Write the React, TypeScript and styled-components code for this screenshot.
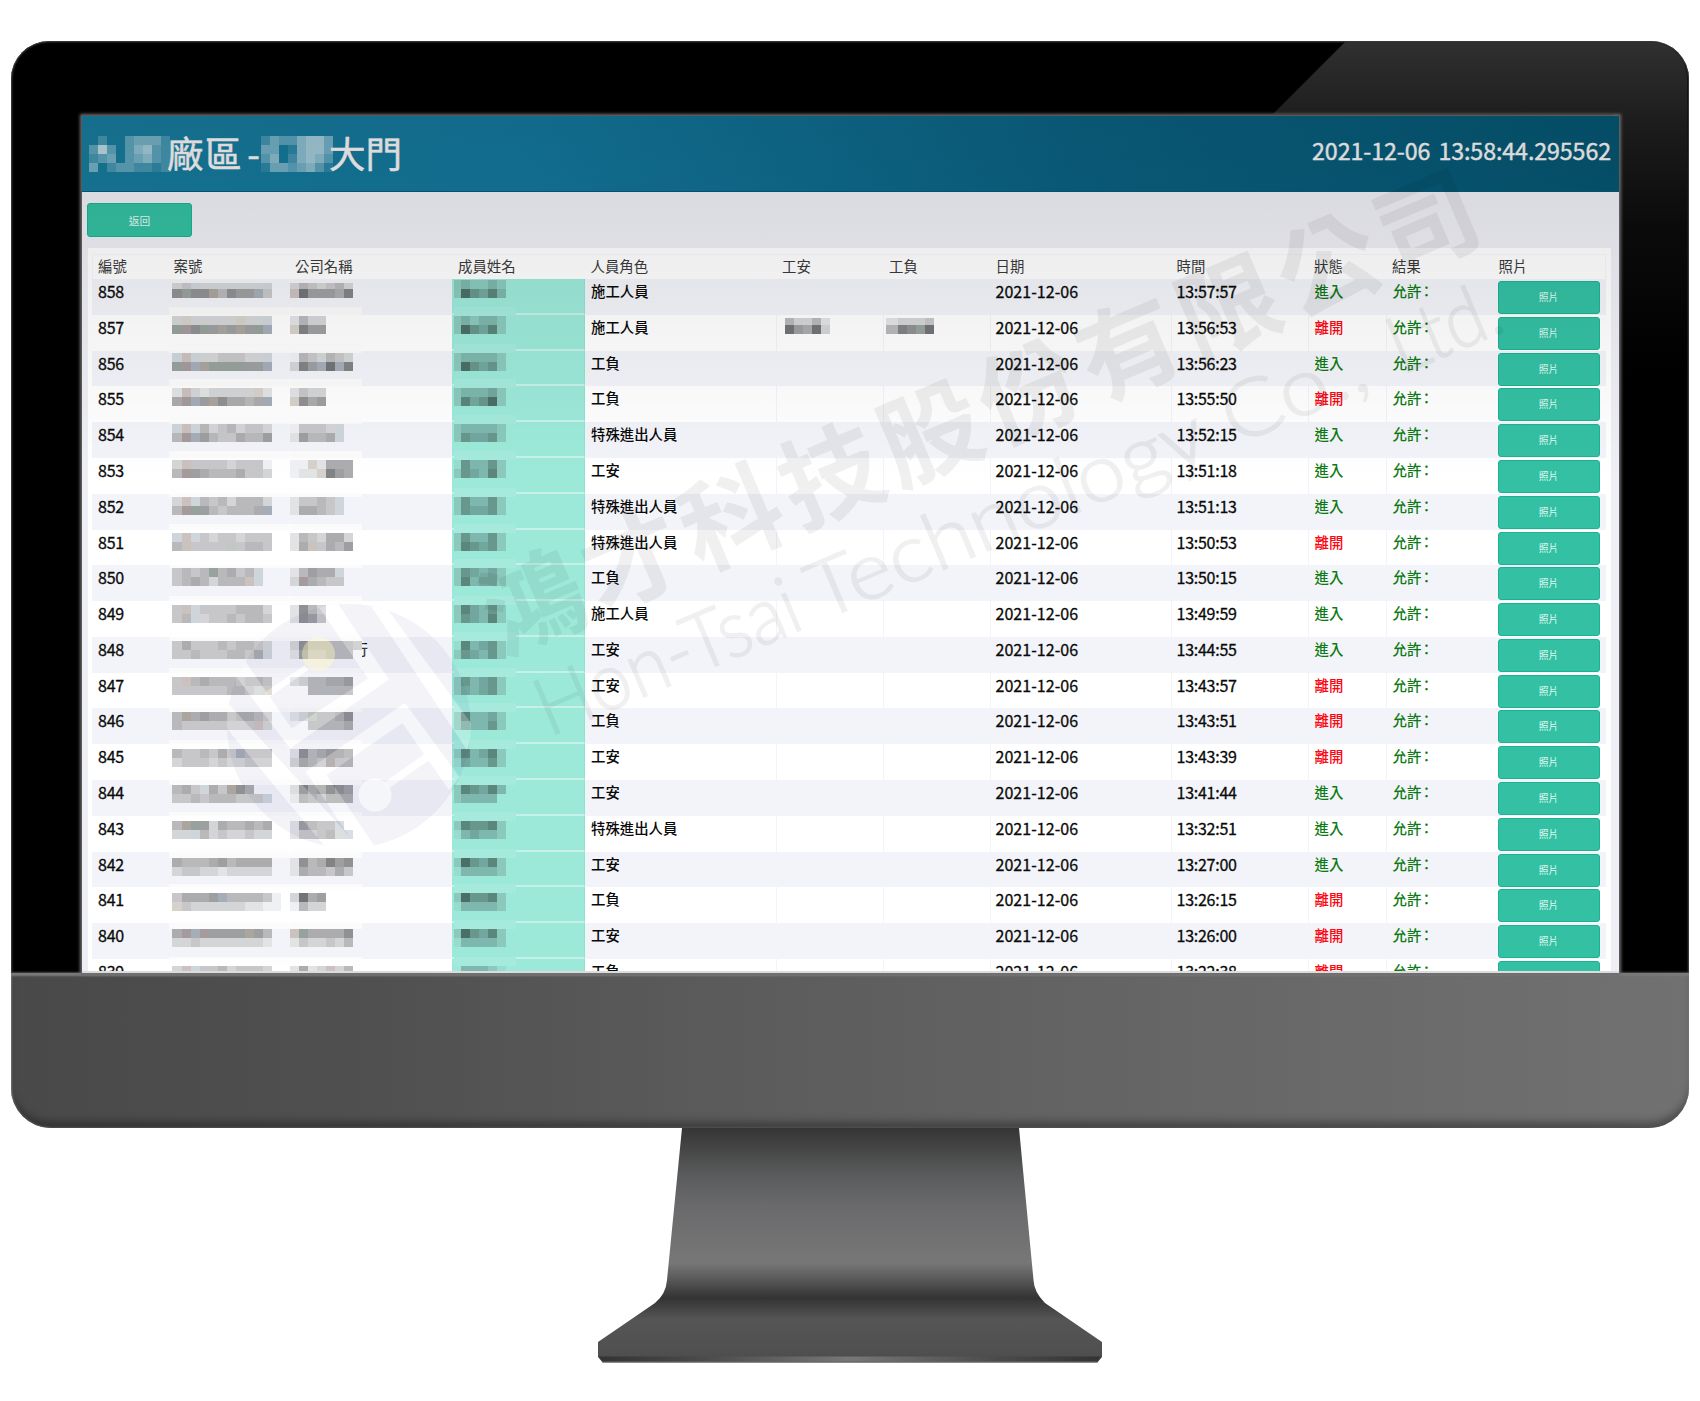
import React from "react";
import styled, { createGlobalStyle, css } from "styled-components";

const CJK = `"Noto Sans CJK TC", "Noto Sans", sans-serif`;

const GlobalStyle = createGlobalStyle`
  * { box-sizing: border-box; }
  body { margin: 0; background: #fff; font-family: ${CJK}; }
`;

const COLUMNS =
  "75.5px 121.5px 163px 132.5px 191.5px 107px 106.5px 181px 137.5px 78px 106.5px 112px";

/* ---------- monitor ---------- */

const Page = styled.main`
  width: 1700px;
  height: 1401px;
  padding: 41px 0 0 11px;
  overflow: hidden;
`;

const Monitor = styled.div`
  width: 1678px;
  display: flex;
  flex-direction: column;
  align-items: center;
`;

const Bezel = styled.div`
  position: relative;
  width: 100%;
  height: 932px;
  padding: 75px 70px 0 71px;
  background: #000;
  border-radius: 38px 38px 0 0;
  box-shadow: inset 0 0 2px 1px #4a4a4a;
`;

const Gloss = styled.div`
  position: absolute;
  inset: 1px 2px auto auto;
  width: 414px;
  height: 330px;
  border-radius: 0 36px 0 0;
  background: linear-gradient(#303030, #1c1c1c 25%, #0b0b0b 55%, #000);
  clip-path: polygon(72px 0, 100% 0, 100% 100%, 340px 100%, 340px 72px, 0 72px);
`;

const Chin = styled.div`
  width: 100%;
  height: 155px;
  border-radius: 0 0 40px 40px;
  background: linear-gradient(90deg, #49494a, #505050 22%, #5b5b5b 42%, #686868 75%, #717171);
  box-shadow: inset 0 3px 2px #7a7a7a, inset 0 -9px 9px -3px rgba(0, 0, 0, 0.35),
    inset 0 0 2px 1px #777;
`;

const StandArt = styled.svg`
  display: block;
  width: 504px;
  height: 236px;
`;

/* ---------- screen ---------- */

const Screen = styled.div`
  position: relative;
  z-index: 1;
  width: 1537px;
  height: 857px;
  display: flex;
  flex-direction: column;
  background: #eeeef5;
  box-shadow: 0 0 3px 2px #6c6c6c;
`;

const Header = styled.header`
  flex: none;
  height: 76px;
  padding: 0 8px 0 7px;
  display: flex;
  align-items: flex-start;
  justify-content: space-between;
  background: linear-gradient(97deg, #177b9c, #13769a 30%, #0a6080 65%, #055571);
  border-bottom: 1px solid #04597a;
`;

const Title = styled.h1`
  margin: 0;
  padding-top: 20px;
  display: flex;
  align-items: flex-start;
  font-size: 36.5px;
  font-weight: 400;
  line-height: 33px;
  color: #f4f2f2;
`;

const TitleText = styled.span<{ $w: number }>`
  display: flex;
  justify-content: space-between;
  width: ${(p) => p.$w}px;
  margin-left: -4px;
  white-space: nowrap;
  -webkit-text-stroke: 0.5px #f4f2f2;
`;

const Spaced = styled.span`
  padding-left: 1px;
  letter-spacing: 1.5px;
`;

const Clock = styled.time`
  padding-top: 19px;
  font-size: 23.2px;
  line-height: 30px;
  word-spacing: 3px;
  letter-spacing: -0.08px;
  color: #f4f2f2;
  -webkit-text-stroke: 0.4px #f4f2f2;
`;

const Toolbar = styled.div`
  flex: none;
  height: 56px;
  padding: 11px 0 0 5px;
`;

const buttonLook = css`
  border: 1px solid #19b394;
  border-radius: 3px;
  background: #34c0a3;
  color: #e2fbf5;
  font-family: ${CJK};
  display: flex;
  align-items: center;
  justify-content: center;
  padding: 0;
`;

const BackButton = styled.button`
  ${buttonLook}
  width: 105px;
  height: 34px;
  font-size: 10.7px;
`;

const PhotoButton = styled.button`
  ${buttonLook}
  width: 102px;
  height: 33px;
  padding-bottom: 1px;
  font-size: 9.8px;
`;

const Panel = styled.section`
  width: 1523px;
  height: 723px;
  margin-left: 6px;
  padding: 6px 5px 0 4px;
  background: #fff;
  overflow: hidden;
`;

const ScreenFoot = styled.div`
  height: 2px;
  background: #dcdcdc;
`;

const HeadRow = styled.div`
  display: grid;
  grid-template-columns: ${COLUMNS};
  height: 25px;
  border: 1px solid #f7f7f9;
  border-bottom: 0;
`;

const HeadCell = styled.div`
  padding-left: 5px;
  font-size: 14.4px;
  line-height: 21px;
  color: #3a3a3a;
`;

const Row = styled.div<{ $tall: boolean; $tint: boolean }>`
  display: grid;
  grid-template-columns: ${COLUMNS};
  height: ${(p) => (p.$tall ? 36 : 35)}px;
  background: ${(p) => (p.$tint ? "#f3f4f9" : "#fff")};
`;

const Cell = styled.div<{ $color?: string; $line?: boolean }>`
  min-width: 0;
  padding: 0 0 0 5.5px;
  font-size: 14.4px;
  line-height: 24px;
  font-weight: 500;
  color: ${(p) => p.$color ?? "#0a0a0a"};
  border-left: 1px solid ${(p) => (p.$line ? "#f4f4f8" : "transparent")};
  white-space: nowrap;
`;

const NumberCell = styled(Cell)<{ $tracking?: number }>`
  padding-left: 5px;
  font-size: 16px;
  font-weight: 400;
  letter-spacing: ${(p) => p.$tracking ?? 0}px;
  -webkit-text-stroke: 0.3px #0a0a0a;
`;

const Colon = styled.span`
  margin-left: -2px;
`;

const MaskedCell = styled.div<{ $inset: number }>`
  min-width: 0;
  padding-left: ${(p) => p.$inset}px;
`;

const MemberCell = styled(MaskedCell)`
  background: #9ce9da;
  border-right: 1px solid #8fe2d2;
  border-bottom: 2px solid #c6f1e9;
`;

const PhotoCell = styled.div`
  padding: 2px 0 0 5px;
`;

/* ---------- mosaics ---------- */

const MosaicBox = styled.div<{ $shift: number; $nudge: number }>`
  display: flex;
  flex-direction: column;
  width: max-content;
  margin-top: ${(p) => p.$shift}px;
  margin-left: ${(p) => p.$nudge}px;
`;

const Haze = styled.div<{ $w: number; $pull: number; $color: string }>`
  width: ${(p) => p.$w}px;
  height: 9px;
  margin-left: -${(p) => p.$pull}px;
  background: ${(p) => p.$color};
`;

const MosaicLine = styled.div<{ $h: number }>`
  display: flex;
  height: ${(p) => p.$h}px;
`;

const Block = styled.i<{ $c: string; $w: number }>`
  flex: none;
  width: ${(p) => p.$w}px;
  background: ${(p) => p.$c};
`;

const WithTail = styled.div`
  display: flex;
  align-items: flex-end;
`;

const Tail = styled.span`
  width: 6px;
  height: 19px;
  overflow: hidden;
  display: flex;
  justify-content: flex-end;
  font-size: 14.4px;
  font-weight: 500;
  line-height: 18px;
`;

const GREY: Record<string, string> = {
  "0": "#727577", "1": "#818385", "2": "#909193", "3": "#9e9fa1", "4": "#acacae",
  "5": "#b9b9bb", "6": "#c7c7c9", "7": "#d4d5d6", "8": "#e2e3e5", "9": "#eff0f3",
  p: "#cbc1bf", P: "#a59b9d", b: "#ced5db", B: "#a5adb8",
  g: "#c3c7c1", G: "#98a29d", t: "#d6d1ca", T: "#aaa59e",
};

const TEAL: Record<string, string> = {
  "0": "#4a6f66", "1": "#5a867b", "2": "#67978d", "3": "#72a79f",
  "4": "#7db7ad", "5": "#8bc9bd", "6": "#96dccf",
};

const WHITE: Record<string, string> = Object.fromEntries(
  "123456789".split("").map((d) => [d, `rgba(255,255,255,${Number(d) / 10})`]),
);

function Mosaic(props: {
  lines: string[];
  palette: Record<string, string>;
  shift?: number;
  nudge?: number;
  haze?: { w: number; pull: number; color: string };
  firstWidth?: number;
  firstHeight?: number;
}) {
  const { lines, palette, shift = 0, nudge = 0, haze, firstWidth = 9, firstHeight = 9 } = props;
  return (
    <MosaicBox $shift={haze ? shift - 9 : shift} $nudge={nudge}>
      {haze && <Haze $w={haze.w} $pull={haze.pull} $color={haze.color} />}
      {lines.map((line, y) => (
        <MosaicLine key={y} $h={y === 0 ? firstHeight : 9}>
          {line.split("").map((ch, x) => (
            <Block key={x} $c={palette[ch] ?? "transparent"} $w={x === 0 ? firstWidth : 9} />
          ))}
        </MosaicLine>
      ))}
    </MosaicBox>
  );
}

/* ---------- records ---------- */

type Entry = {
  id: number;
  role: string;
  time: string;
  out?: boolean;
  caseNo: [string, string];
  company: [string, string];
  member: [string, string];
  safety?: [string, string];
  lead?: [string, string];
  tail?: string;
};

const ENTRIES: Entry[] = [
  { id: 858, role: "施工人員", time: "13:57:57", caseNo: ["76b7777777b", "2G22T5233B6"], company: ["7567657", "p033341"], member: ["545545", "502314"] },
  { id: 857, role: "施工人員", time: "13:56:53", out: true, caseNo: ["7t77777t77b", "GP2G3T3T3GB"], company: ["8577", "t133"], member: ["545445", "502315"], safety: ["57758", "03407"], lead: ["87776", "512G0"] },
  { id: 856, role: "工負", time: "13:56:23", caseNo: ["bpb7766677b", "GPBTGGGG33B"], company: ["9567567", "713B0B1"], member: ["544445", "502325"] },
  { id: 855, role: "工負", time: "13:55:50", out: true, caseNo: ["8p7877777t8", "4PB3T24454B"], company: ["8677", "t243"], member: ["544435", "513205"] },
  { id: 854, role: "特殊進出人員", time: "13:52:15", caseNo: ["bpb57657667", "5PB35664553"], company: ["96667b", "83554b"], member: ["544445", "523325"] },
  { id: 853, role: "工安", time: "13:51:18", caseNo: ["7p666676669", "5P345554667"], company: ["99t8444", "988t134"], member: ["624425", "523415"] },
  { id: 852, role: "特殊進出人員", time: "13:51:13", caseNo: ["7pb56575557", "5PG3565554B"], company: ["86656b", "84456b"], member: ["524425", "523325"] },
  { id: 851, role: "特殊進出人員", time: "13:50:53", out: true, caseNo: ["bpb67667666", "5p6666g6556"], company: ["8567447", "84p6453"], member: ["524425", "512325"] },
  { id: 850, role: "工負", time: "13:50:15", caseNo: ["6565G5465b", "65457555pb"], company: ["85344b", "7P4566"], member: ["523435", "514335"] },
  { id: 849, role: "施工人員", time: "13:49:59", caseNo: ["6pb66665557", "65b76656556"], company: ["8257", "8236"], member: ["513425", "523415"] },
  { id: 848, role: "工安", time: "13:44:55", caseNo: ["64666565567", "6656665564b"], company: ["72555556", "8366555"], member: ["614325", "523425"], tail: "行" },
  { id: 847, role: "工安", time: "13:43:57", out: true, caseNo: ["6p545556556", "6666665567t"], company: ["8755443", "..55555"], member: ["524325", "534325"] },
  { id: 846, role: "工負", time: "13:43:51", out: true, caseNo: ["5T434454456", "566666666p7"], company: ["87g5542", "..55554"], member: ["514435", "534425"] },
  { id: 845, role: "工安", time: "13:43:39", out: true, caseNo: ["5665646B555", "76667677666"], company: ["8254334", "7456P55"], member: ["514315", "634425"] },
  { id: 844, role: "工安", time: "13:41:44", caseNo: ["546b46T24", "6656555666b"], company: ["7143023", "8456444"], member: ["512314", "54444"] },
  { id: 843, role: "特殊進出人員", time: "13:32:51", caseNo: ["5TG37455454", "77b57677677"], company: ["83455b", "866547b"], member: ["512215", "643445"] },
  { id: 842, role: "工安", time: "13:27:00", caseNo: ["45554354444", "76677877777"], company: ["8254132", "8455646"], member: ["502315", "644445"] },
  { id: 841, role: "工負", time: "13:26:15", out: true, caseNo: ["64443B555569", "t67777778899"], company: ["7043", "9577"], member: ["502215", "644445"] },
  { id: 840, role: "工安", time: "13:26:00", out: true, caseNo: ["4PBP3333T35", "77677777778"], company: ["pG44442", "8677675"], member: ["502315", "644445"] },
  { id: 839, role: "工負", time: "13:22:38", out: true, caseNo: ["7pb66576667", "7pb66576667"], company: ["8487p75", "8487p75"], member: ["744456", "744456"] },
];

const HEADINGS = ["編號", "案號", "公司名稱", "成員姓名", "人員角色", "工安", "工負", "日期", "時間", "狀態", "結果", "照片"];

const PITCH = 35.79;

function EntryRow({ entry, index }: { entry: Entry; index: number }) {
  const top = Math.round(index * PITCH);
  const tall = Math.round((index + 1) * PITCH) - top === 36;
  const white = index % 2 === 1;
  const first = index === 0;
  const shift = 1 + Math.round(index * 0.29);
  const greyHaze = first ? "transparent" : "rgba(253, 253, 253, 0.7)";
  const tealHaze = first ? "transparent" : "#a5eadd";
  const greyShift = first ? 4 : shift;
  const greyTop = first ? 6 : 9;
  return (
    <Row $tall={tall} $tint={!white}>
      <NumberCell $tracking={-0.2}>{entry.id}</NumberCell>
      <MaskedCell $inset={4}>
        <Mosaic
          lines={entry.caseNo}
          palette={GREY}
          shift={greyShift}
          firstHeight={greyTop}
          firstWidth={10}
          haze={{ w: 122, pull: 3, color: greyHaze }}
        />
      </MaskedCell>
      <MaskedCell $inset={1}>
        <WithTail>
          <Mosaic
            lines={entry.company}
            palette={GREY}
            shift={greyShift}
            firstHeight={greyTop}
            haze={{ w: 73, pull: 1, color: greyHaze }}
          />
          {entry.tail && <Tail>{entry.tail}</Tail>}
        </WithTail>
      </MaskedCell>
      <MemberCell $inset={2}>
        <Mosaic
          lines={entry.member}
          palette={TEAL}
          shift={shift}
          firstWidth={7}
          haze={{ w: 62, pull: 0, color: tealHaze }}
        />
      </MemberCell>
      <Cell>{entry.role}</Cell>
      <Cell $line={white}>
        {entry.safety && <Mosaic lines={entry.safety} palette={GREY} shift={3} nudge={2} firstHeight={7} />}
      </Cell>
      <Cell $line={white}>
        {entry.lead && <Mosaic lines={entry.lead} palette={GREY} shift={3} nudge={-4} firstHeight={7} firstWidth={12} />}
      </Cell>
      <NumberCell $line={white} $tracking={0.05}>2021-12-06</NumberCell>
      <NumberCell $line={white} $tracking={-0.25}>{entry.time}</NumberCell>
      <Cell $line={white} $color={entry.out ? "#fb0712" : "#0b7a12"}>
        {entry.out ? "離開" : "進入"}
      </Cell>
      <Cell $line={white} $color="#0b7a12">
        允許<Colon>：</Colon>
      </Cell>
      <PhotoCell>
        <PhotoButton>照片</PhotoButton>
      </PhotoCell>
    </Row>
  );
}

/* ---------- overlays ---------- */

const Shade = styled.div`
  position: absolute;
  inset: 0;
  pointer-events: none;
  background: linear-gradient(rgba(0, 0, 0, 0.105), rgba(0, 0, 0, 0) 364px);
`;

const WatermarkArt = styled.svg`
  position: absolute;
  inset: 0;
  width: 1537px;
  height: 855px;
  pointer-events: none;
`;

const WORDS = [
  { word: "Hon-Tsai", x: 0, w: 280 },
  { word: "Technology", x: 296, w: 425 },
  { word: "Co.,", x: 745, w: 150 },
  { word: "Ltd.", x: 926, w: 116 },
];

function LogoCuts() {
  return (
    <>
      <path d="M226 701L361 849H327L224 725Z" />
      <path d="M245 661L291.700 728.500L368 678.500L318 606L338 604L389 679.500L290 748.500L236.500 677Z" />
      <path d="M305.500 771.500L405 703L459.500 777L449 790L402.500 723L326.500 775L374.500 846L358 849Z" />
      <path d="M371 606L388 610L474 727L467 750Z" />
      <path d="M264 693L305 665L308.500 670L268 698Z" />
      <path d="M382 784L425 753.500L430 759.500L388 789Z" />
      <circle cx="375" cy="795" r="16.500" />
    </>
  );
}

function Watermark() {
  return (
    <WatermarkArt viewBox="82 116 1537 855">
      <defs>
        <mask id="cuts" maskUnits="userSpaceOnUse" x="200" y="580" width="300" height="300">
          <rect x="200" y="580" width="300" height="300" fill="#fff" />
          <g fill="#000">
            <LogoCuts />
            <circle cx="318.5" cy="654" r="16.500" />
          </g>
        </mask>
        <clipPath id="disc">
          <circle cx="349" cy="726" r="122" />
        </clipPath>
      </defs>
      <circle cx="349" cy="726" r="122" fill="#3a3a90" fillOpacity="0.06" mask="url(#cuts)" />
      <g clipPath="url(#disc)">
        <g fill="#fff" fillOpacity="0.22">
          <LogoCuts />
        </g>
      </g>
      <circle cx="318.5" cy="654" r="16.500" fill="#f4efb8" fillOpacity="0.4" />
      <g opacity="0.056">
        <text
          transform="translate(501 656) rotate(-23)"
          fontFamily={CJK}
          fontWeight="700"
          fontSize="101"
          textLength="1072"
        >
          鴻才科技股份有限公司
        </text>
        <g
          transform="translate(549 737) rotate(-23)"
          fontFamily="Lato, sans-serif"
          fontWeight="300"
          fontSize="80"
          stroke="#000"
          strokeWidth="1.600"
        >
          {WORDS.map(({ word, x, w }) => (
            <text key={word} x={x} y="0" textLength={w} lengthAdjust="spacingAndGlyphs">
              {word}
            </text>
          ))}
        </g>
      </g>
    </WatermarkArt>
  );
}

function Stand() {
  return (
    <StandArt viewBox="598 1128 504 236">
      <defs>
        <linearGradient id="neck" gradientUnits="userSpaceOnUse" x1="0" y1="1128" x2="0" y2="1364">
          <stop offset="0" stopColor="#353535" />
          <stop offset="0.07" stopColor="#424242" />
          <stop offset="0.2" stopColor="#5a5b5c" />
          <stop offset="0.33" stopColor="#6a6a6d" />
          <stop offset="0.48" stopColor="#727272" />
          <stop offset="0.57" stopColor="#767776" />
          <stop offset="0.63" stopColor="#5e5e5e" />
          <stop offset="0.72" stopColor="#333" />
          <stop offset="0.81" stopColor="#555" />
          <stop offset="0.95" stopColor="#505050" />
          <stop offset="1" stopColor="#484848" />
        </linearGradient>
        <linearGradient id="lip">
          <stop offset="0" stopColor="#333" />
          <stop offset="0.2" stopColor="#4a4a4a" />
          <stop offset="0.5" stopColor="#777" />
          <stop offset="0.8" stopColor="#4a4a4a" />
          <stop offset="1" stopColor="#333" />
        </linearGradient>
      </defs>
      <path
        d="M682 1128H1019L1033.5 1280Q1034 1292 1045 1303L1102 1342V1357L1097 1363H603L598 1357V1342L655 1303Q666 1294 667 1280Z"
        fill="url(#neck)"
      />
      <path d="M598.5 1356.500H1101.500L1097 1361.500H603Z" fill="url(#lip)" />
      <path d="M603 1362.300H1097" stroke="#8a8a8a" strokeWidth="1.200" />
    </StandArt>
  );
}

export default function App() {
  return (
    <Page>
      <GlobalStyle />
      <Monitor>
        <Bezel>
          <Gloss />
          <Screen>
            <Header>
              <Title>
                <Mosaic lines={["020034442", "373035632", "234034532", "402332212"]} palette={WHITE} />
                <TitleText $w={94}>
                  <Spaced>廠區</Spaced>
                  <span>-</span>
                </TitleText>
                <Mosaic
                  lines={["24335664", "44015664", "35025653", "14434531"]}
                  palette={WHITE}
                  nudge={1}
                />
                <TitleText $w={75}>大門</TitleText>
              </Title>
              <Clock>2021-12-06 13:58:44.295562</Clock>
            </Header>
            <Toolbar>
              <BackButton>返回</BackButton>
            </Toolbar>
            <Panel>
              <HeadRow>
                {HEADINGS.map((label, i) => (
                  <HeadCell key={i}>{label}</HeadCell>
                ))}
              </HeadRow>
              {ENTRIES.map((entry, i) => (
                <EntryRow key={entry.id} entry={entry} index={i} />
              ))}
            </Panel>
            <ScreenFoot />
            <Shade />
            <Watermark />
          </Screen>
        </Bezel>
        <Chin />
        <Stand />
      </Monitor>
    </Page>
  );
}
